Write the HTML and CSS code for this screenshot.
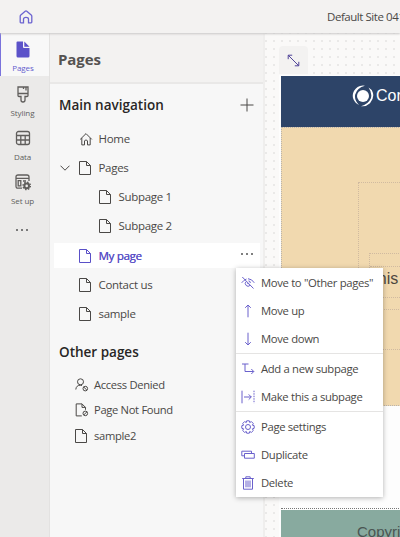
FILE: index.html
```
<!DOCTYPE html>
<html lang="en">
<head>
<meta charset="utf-8">
<title>Pages</title>
<link rel="stylesheet" href="styles.css">
</head>
<body>
<svg class="defs" width="0" height="0">
  <symbol id="page" viewBox="0 0 12 14"><path d="M.5 .5H7.5L11.5 4.5V13.5H.5ZM7.5 .5V4.5H11.5"/></symbol>
  <symbol id="house" viewBox="0 0 14 14"><path d="M1.2 7.4 7 1.6 12.8 7.4M2.8 6V12.9H5.5V8.8Q7 7 8.5 8.8V12.9H11.2V6"/></symbol>
</svg>
<div class="app">
  <header class="topbar">
    <svg class="home" width="14" height="14" viewBox="0 0 14 14"><path d="M1.2 6.2Q1.2 5.5 1.8 5L6.2 1.2Q7 .6 7.8 1.2L12.2 5Q12.8 5.5 12.8 6.2V12.1Q12.8 12.8 12.1 12.8H9.5V9.2Q9.5 7.3 7 7.3T4.5 9.2V12.8H1.9Q1.2 12.8 1.2 12.1Z"/></svg>
    <span class="site">Default Site 041</span>
  </header>
  <div class="main">
    <nav class="rail">
      <a class="tab active"><svg width="14" height="17" viewBox="0 0 14 17"><path class="solid" d="M1.5 .5H7V6Q7 7 8 7H13.5V15Q13.5 16.5 12 16.5H2Q.5 16.5 .5 15V1.5Q.5 .5 1.5 .5ZM8.3 .5 13.5 5.7H8.3Z"/></svg><span>Pages</span></a>
      <a class="tab"><svg width="14" height="17" viewBox="0 0 14 17"><path d="M2 1H12V9.5Q12 10.5 11 10.5H9V14Q9 16 7 16T5 14V10.5H3Q2 10.5 2 9.5ZM2 7.5H12M7.5 1V3M10 1V4.5"/></svg><span>Styling</span></a>
      <a class="tab"><svg width="16" height="17" viewBox="0 0 16 17"><rect x="1.5" y="1.5" width="13" height="13" rx="2"/><path d="M1.5 5.5H14.5M1.5 10H14.5M5.8 5.5V14.5M10.2 5.5V14.5"/></svg><span>Data</span></a>
      <a class="tab"><svg width="16" height="17" viewBox="0 0 16 17"><path d="M7 14.2H3Q1 14.2 1 12.2V3Q1 1 3 1H12Q14 1 14 3V7M1 4.3H14M3.2 6.7H5.8V11.8H3.2ZM8 7H11"/><circle cx="11.7" cy="11.9" r="2.3" stroke-width="2"/><circle cx="11.7" cy="11.9" r="3.7" stroke-width="1.4" stroke-dasharray="1.5 1.4"/></svg><span>Set up</span></a>
      <div class="dots"><i></i><i></i><i></i></div>
    </nav>
    <section class="panel">
      <h1>Pages</h1>
      <div class="section"><h2>Main navigation</h2><svg width="14" height="14" viewBox="0 0 14 14"><path d="M7 .5V13.5M.5 7H13.5"/></svg></div>
      <ul class="tree">
        <li><svg width="14" height="14"><use href="#house"/></svg><span>Home</span></li>
        <li class="open"><svg class="chevron" width="10" height="6" viewBox="0 0 10 6"><path d="M.5 .7 5 5.2 9.5 .7"/></svg><svg width="12" height="14"><use href="#page"/></svg><span>Pages</span></li>
        <li class="sub"><svg width="12" height="14"><use href="#page"/></svg><span>Subpage 1</span></li>
        <li class="sub"><svg width="12" height="14"><use href="#page"/></svg><span>Subpage 2</span></li>
        <li class="selected"><svg width="12" height="14"><use href="#page"/></svg><span>My page</span><div class="dots"><i></i><i></i><i></i></div></li>
        <li><svg width="12" height="14"><use href="#page"/></svg><span>Contact us</span></li>
        <li><svg width="12" height="14"><use href="#page"/></svg><span>sample</span></li>
      </ul>
      <h2 class="other">Other pages</h2>
      <ul class="others">
        <li><svg width="14" height="14" viewBox="0 0 14 14"><circle cx="5.5" cy="3.8" r="3"/><path d="M.8 11.5Q1.2 7.2 5.5 7.2L7 7.5"/><circle cx="10.3" cy="10.6" r="2.3"/><path d="M8.7 9 11.9 12.2"/></svg><span>Access Denied</span></li>
        <li><svg width="14" height="14" viewBox="0 0 14 14"><path d="M6.8 12.9H1.2V.9H7L10.5 4.4V6.8M7 .9V4.4H10.5"/><circle cx="10.3" cy="10.4" r="2.3"/><path d="M8.7 12 11.9 8.8"/></svg><span>Page Not Found</span></li>
        <li><svg width="12" height="14"><use href="#page"/></svg><span>sample2</span></li>
      </ul>
    </section>
    <section class="canvas">
      <div class="expand"><svg width="13" height="13" viewBox="0 0 13 13"><path d="M1.2 5.2V1.2H5.2M1.2 1.2 11.8 11.8M11.8 7.8V11.8H7.8"/></svg></div>
      <div class="site-page">
        <div class="brand"><svg width="22" height="22" viewBox="0 0 22 22"><circle cx="11" cy="11" r="6"/><path d="M13 .8A10.2 10.2 0 0 0 1 13Q2.5 18 7 20Q2 15 3.2 9.5Q5 3 13 .8ZM9 21.2Q14 22 18 18.3Q22.5 13 20.8 7.5Q19.5 4 16.5 2.5Q20.5 8 18.8 13.5Q16 19.5 9 21.2Z"/></svg><span>Contoso</span></div>
        <div class="hero"><div class="outer"><div class="inner"><div class="spacer"></div><div class="copy">This is</div></div></div></div>
        <div class="blank"></div>
        <footer>Copyright</footer>
      </div>
    </section>
  </div>
  <div class="menu">
    <div class="group">
      <div class="item"><svg viewBox="0 0 14 14"><path d="M.7 6.8Q3 3.8 5.5 3M7 2.7Q11 3 13.3 6.8M1.3 1 12.5 12.5M9.3 7Q9.5 5 7.5 4.9M5.1 5.6A2.7 2.7 0 0 0 9 9.4M6.4 7.1 7.6 8.3"/></svg><span>Move to "Other pages"</span></div>
      <div class="item"><svg viewBox="0 0 14 14"><path d="M7 13.3V1M4.2 3.8 7 1 9.8 3.8"/></svg><span>Move up</span></div>
      <div class="item"><svg viewBox="0 0 14 14"><path d="M7 .7V13M4.2 10.2 7 13 9.8 10.2"/></svg><span>Move down</span></div>
    </div>
    <div class="group">
      <div class="item"><svg viewBox="0 0 14 14"><path d="M1 2H7.5M4 2V9.5H12.7M10.3 7 12.8 9.5 10.3 12"/></svg><span>Add a new subpage</span></div>
      <div class="item"><svg viewBox="0 0 14 14"><path d="M1 .7V13.3M3 7H10.3M7.7 4.4 10.3 7 7.7 9.6"/><path d="M13 .7V13.3" stroke-dasharray="1.5 1"/></svg><span>Make this a subpage</span></div>
    </div>
    <div class="group">
      <div class="item"><svg viewBox="0 0 14 14"><circle cx="7" cy="7" r="2.5"/><path d="M5.7 .8H8.3L8.7 2.5 10.4 1.6 12.3 3.5 11.4 5.2 13.2 5.7V8.3L11.4 8.8 12.3 10.5 10.4 12.4 8.7 11.5 8.3 13.2H5.7L5.3 11.5 3.6 12.4 1.7 10.5 2.6 8.8 .8 8.3V5.7L2.6 5.2 1.7 3.5 3.6 1.6 5.3 2.5Z"/></svg><span>Page settings</span></div>
      <div class="item"><svg viewBox="0 0 14 14"><path d="M3.5 7.8H.8V3.2H10.5V5.5M3.5 5.5H13.3V10.2H3.5Z"/></svg><span>Duplicate</span></div>
      <div class="item"><svg viewBox="0 0 14 14"><path d="M1.2 2.5H12.8M4.8 2.5V.8H9.2V2.5M2.5 2.5V13.2H11.5V2.5M5 4.5V11.3M7 4.5V11.3M9 4.5V11.3"/></svg><span>Delete</span></div>
    </div>
  </div>
</div>
</body>
</html>
```
FILE: styles.css
```
* { box-sizing: border-box; }
body, h1, h2, ul { margin: 0; padding: 0; }
ul { list-style: none; }
body { width: 400px; height: 537px; overflow: hidden; font: 12px/16px "Open Sans", "Noto Sans", sans-serif; color: #4a4846; }
svg { display: block; flex: none; fill: none; stroke: currentColor; stroke-width: 1; }
span { white-space: nowrap; }
.defs { position: absolute; }
.app { position: relative; display: flex; flex-direction: column; width: 400px; height: 537px; overflow: hidden; }

.topbar { flex: none; display: flex; align-items: center; height: 33px; padding-left: 19px; background: #f3f2f1; box-shadow: 0 1px 2px #c9c8c7; z-index: 1; }
.home { color: #6b63d0; stroke-width: 1.3; }
.site { margin-left: 294px; font-size: 11.5px; letter-spacing: -.45px; }

.main { flex: 1; display: flex; min-height: 0; }
.rail { flex: none; width: 50px; background: #ebeae9; border-right: 1px solid #e3e2e1; color: #605e5c; }
.tab { display: flex; flex-direction: column; align-items: center; height: 44.4px; padding-top: 9.5px; font-size: 8px; line-height: 10px; letter-spacing: -.1px; }
.tab svg { stroke-width: 1.3; margin-right: 4px; }
.tab span { margin: 5px 4px 0 0; }
.tab.active { height: 43px; padding-top: 8px; background: #f8f8f8; border-left: 1px solid #7a73dc; color: #655dce; }
.solid { fill: #5b52c9; stroke: none; }
.dots { display: flex; gap: 3px; }
.dots i { width: 2px; height: 2px; border-radius: 1px; background: #555; }
.rail .dots { margin: 20px 0 0 16px; }

.panel { flex: none; width: 215px; background: #f7f7f7; border-right: 2px solid #efeeed; }
h1 { height: 51px; padding: 15px 0 0 8px; border-bottom: 2px solid #e9e8e7; background: #f3f2f1; font-size: 15px; line-height: 22px; font-weight: 700; color: #555351; letter-spacing: -.1px; }
h2 { font-size: 13.5px; line-height: 20px; font-weight: 600; color: #282625; }
.section { display: flex; align-items: center; justify-content: space-between; height: 42px; padding: 0 9px 0 9px; }
.tree li { display: flex; align-items: center; height: 25px; margin: 0 3px 4.3px 4px; padding-left: 25px; }
.tree li span { margin-left: 7.5px; font-size: 11.5px; letter-spacing: -.3px; }
.tree svg[width="14"] { margin-right: -2px; }
.tree .open { padding-left: 6px; }
.chevron { margin-right: 9px; }
.tree .sub { padding-left: 45px; }
.tree .selected { background: #fff; color: #5a50c7; }
.selected span { text-shadow: .3px 0 currentColor; }
.selected .dots { margin: -4px 7px 0 auto; }
.other { padding: 11px 0 0 9px; }
.others { padding: 10px 0 0 25px; }
.others li { display: flex; align-items: center; height: 25.5px; }
.others svg { width: 14px; }
.others svg[width="12"] { width: 12px; margin-right: 2px; }
.others span { margin-left: 5px; font-size: 11.2px; letter-spacing: -.32px; }

.canvas { flex: 1; min-width: 0; padding: 13px 0 0 14px; overflow: hidden; background: #faf9f8 radial-gradient(circle, #eae9e8 1px, transparent 1.3px) 5px 4px / 8px 8px; }
.expand { display: flex; align-items: center; justify-content: center; width: 29px; height: 28px; border-radius: 4px 4px 0 0; background: #f3f2f1; color: #514599; }
.site-page { margin: 1px 0 0; padding: 1px 0 0 2px; width: 140px; background: #fdfdfd; font-family: "Liberation Sans", sans-serif; }
.brand { display: flex; align-items: center; height: 51px; padding: 0 0 12px 71px; background: #2d4468; color: #fff; font-size: 16px; }
.brand svg { fill: #fff; stroke: none; }
.brand span { margin: 1px 0 0 2px; }
.hero { height: 279px; padding: 54px 0 0 76px; border: dotted #bab4ae; border-width: 1px 0 1px 1px; background: #f1d9af; }
.outer { width: 100px; height: 168px; padding: 70px 0 0 10px; border: 1px dotted #d0baa0; }
.inner { height: 57px; border: 1px dotted #d0baa0; }
.spacer { height: 13px; border-bottom: 1px dotted #d0baa0; }
.copy { height: 31px; padding: 3px 0 0 0; border-bottom: 1px dotted #d0baa0; font-size: 16px; line-height: 18px; color: #4d473f; white-space: nowrap; text-indent: -2px; }
.blank { height: 103px; border-bottom: 1px dotted #777; }
footer { height: 40px; margin-top: 1px; padding: 12px 0 0 76px; background: #88aa9f; font-size: 15px; line-height: 20px; color: #4a5552; }

.menu { position: absolute; left: 236px; top: 268px; z-index: 2; width: 147px; height: 229px; background: #fff; box-shadow: 0 1px 5px rgba(0,0,0,.3); }
.group + .group { border-top: 1px solid #e5e4e3; }
.item { display: flex; align-items: center; height: 28.4px; padding: 1px 0 0 5px; }
.item svg { width: 14px; height: 14px; color: #6a61cc; }
.item span { margin-left: 6px; font-size: 11.3px; letter-spacing: -.34px; }
```
